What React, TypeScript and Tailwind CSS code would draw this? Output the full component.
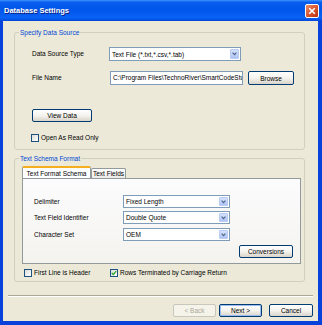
import React from "react";

function Chevron() {
  return (
    <svg width="5" height="4" viewBox="0 0 5 4">
      <path d="M0.6 0.6 L2.5 2.6 L4.4 0.6" fill="none" stroke="#4D6185" strokeWidth="1.1" />
    </svg>
  );
}

function Combo({ value, className }: { value: string; className: string }) {
  return (
    <div className={"flex border border-[#7F9DB9] bg-white " + className}>
      <span className="flex-1 self-center truncate pl-[2px] leading-[9px]">{value}</span>
      <span className="my-[1px] mr-[1px] flex w-[9px] items-center justify-center rounded-[1px] border border-[#B8CBF4] bg-gradient-to-b from-[#D5E2FD] to-[#AFC4F4]">
        <Chevron />
      </span>
    </div>
  );
}

type BtnKind = "normal" | "default" | "disabled";

function XPButton({ label, className, kind = "normal" }: { label: string; className: string; kind?: BtnKind }) {
  const look =
    kind === "disabled"
      ? "border-[#C9C7BA] bg-[#F5F4EA] text-[#ACA899]"
      : kind === "default"
        ? "border-[#003C74] bg-gradient-to-b from-white via-[#F4F3EE] to-[#D9D4C9] text-black shadow-[inset_0_0_0_1px_#9DBCF0]"
        : "border-[#003C74] bg-gradient-to-b from-white via-[#F4F3EE] to-[#D9D4C9] text-black";
  return (
    <div className={"flex items-center justify-center rounded-[2px] border leading-[9px] " + look + " " + className}>
      {label}
    </div>
  );
}

function CheckBox({ label, checked = false }: { label: string; checked?: boolean }) {
  return (
    <span className="flex items-center gap-[2px]">
      <span className="flex h-[8px] w-[8px] items-center justify-center border border-[#1C5180] bg-gradient-to-br from-[#DCDCD7] to-white">
        {checked && (
          <svg width="6" height="6" viewBox="0 0 6 6">
            <path d="M0.8 3 L2.3 4.6 L5.2 1.2" fill="none" stroke="#21A121" strokeWidth="1.3" />
          </svg>
        )}
      </span>
      <span className="leading-[9px]">{label}</span>
    </span>
  );
}

function GroupBox({ title, className, children }: { title: string; className: string; children: React.ReactNode }) {
  return (
    <div className={"relative rounded-[3px] border border-[#D0D0BF] " + className}>
      <span className="absolute -top-[5px] left-[4px] bg-[#ECE9D8] px-[1px] leading-[9px] text-[#0046D5]">{title}</span>
      {children}
    </div>
  );
}

export default function App() {
  return (
    <div className="flex h-[325px] w-[322px] flex-col bg-[#0842DA] font-['Liberation_Sans',Arial,sans-serif] text-[6.5px] text-black">
      {/* title bar */}
      <div className="flex h-[21px] items-center justify-between bg-[linear-gradient(to_bottom,#3D95FF_0%,#0A5FF0_10%,#0055EA_45%,#0A62F6_85%,#0046D6_100%)] pl-[4px] pr-[3px]">
        <span className="text-[7.5px] font-bold leading-[10px] text-white [text-shadow:1px_1px_0_#0A1E7A]">Database Settings</span>
        <span className="flex h-[14px] w-[14px] items-center justify-center rounded-[2px] border border-white bg-gradient-to-br from-[#EB8B68] via-[#D9562E] to-[#B8330F]">
          <svg width="8" height="8" viewBox="0 0 8 8">
            <path d="M1.2 1.2 L6.8 6.8 M6.8 1.2 L1.2 6.8" stroke="white" strokeWidth="1.6" />
          </svg>
        </span>
      </div>

      {/* body */}
      <div className="mb-[4px] ml-[3px] mr-[4px] flex flex-1 flex-col bg-[#ECE9D8]">
        <GroupBox title="Specify Data Source" className="ml-[11px] mt-[11px] h-[118px] w-[291px] pl-[17px] pt-[14px]">
          <div className="flex items-center">
            <span className="w-[77px]">Data Source Type</span>
            <Combo value="Text File (*.txt,*.csv,*.tab)" className="h-[14px] w-[132px]" />
          </div>
          <div className="mt-[10px] flex items-center">
            <span className="w-[77px]">File Name</span>
            <div className="ml-[1px] flex h-[14px] w-[133px] items-center overflow-hidden whitespace-nowrap border border-[#7F9DB9] bg-white pl-[2px]">
              C:\Program Files\TechnoRiver\SmartCodeStudio
            </div>
            <XPButton label="Browse" className="ml-[5px] h-[14px] w-[46px]" />
          </div>
          <XPButton label="View Data" className="mt-[24px] h-[13px] w-[60px]" />
          <div className="-ml-[1px] mt-[11px]">
            <CheckBox label="Open As Read Only" />
          </div>
        </GroupBox>

        <GroupBox title="Text Schema Format" className="ml-[11px] mt-[8px] h-[124px] w-[291px] pl-[7px] pt-[7px]">
          <div className="flex items-end">
            <div className="flex h-[12px] w-[69px] items-center justify-center rounded-t-[2px] border-x border-t-2 border-[#919B9C] border-t-[#F5AE1F] bg-white leading-[9px]">
              Text Format Schema
            </div>
            <div className="flex h-[10px] w-[35px] items-center justify-center rounded-t-[2px] border-x border-t border-[#919B9C] bg-gradient-to-b from-white to-[#ECEBE6] leading-[9px]">
              Text Fields
            </div>
          </div>
          <div className="h-[86px] w-[279px] border border-[#919B9C] bg-gradient-to-b from-[#FCFCFE] to-[#F4F3EE] pl-[11px] pt-[16px]">
            <div className="flex items-center">
              <span className="w-[89px]">Delimiter</span>
              <Combo value="Fixed Length" className="h-[13px] w-[107px]" />
            </div>
            <div className="mt-[3px] flex items-center">
              <span className="w-[89px]">Text Field Identifier</span>
              <Combo value="Double Quote" className="h-[13px] w-[107px]" />
            </div>
            <div className="mt-[4px] flex items-center">
              <span className="w-[89px]">Character Set</span>
              <Combo value="OEM" className="h-[13px] w-[107px]" />
            </div>
            <div className="mt-[4px] flex justify-end pr-[7px]">
              <XPButton label="Conversions" className="h-[13px] w-[54px]" />
            </div>
          </div>
          <div className="ml-[2px] mt-[4px] flex">
            <span className="w-[86px]">
              <CheckBox label="First Line is Header" />
            </span>
            <CheckBox label="Rows Terminated by Carriage Return" checked />
          </div>
        </GroupBox>

        <div className="ml-[5px] mt-[13px] w-[305px] border-b border-t border-b-white border-t-[#ACA899]" />

        <div className="mr-[5px] mt-[7px] flex justify-end">
          <XPButton label="< Back" kind="disabled" className="h-[13px] w-[43px]" />
          <XPButton label="Next >" kind="default" className="ml-[3px] h-[13px] w-[43px]" />
          <XPButton label="Cancel" className="ml-[7px] h-[13px] w-[44px]" />
        </div>
      </div>
    </div>
  );
}
